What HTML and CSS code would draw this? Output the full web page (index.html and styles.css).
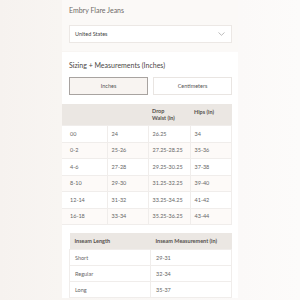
FILE: index.html
```html
<!DOCTYPE html>
<html>
<head>
<meta charset="utf-8">
<link rel="stylesheet" href="styles.css">
</head>
<body>
<div class="page">
  <div class="top">
    <div class="product">Embry Flare Jeans</div>
    <div class="select">
      <span>United States</span>
      <svg class="chev" width="7" height="4" viewBox="0 0 7 4"><path d="M0.5 0.5 L3.5 3.3 L6.5 0.5" fill="none" stroke="#aaa" stroke-width="0.8"/></svg>
    </div>
  </div>
  <div class="card">
    <h2 class="heading">Sizing + Measurements (Inches)</h2>
    <div class="toggle">
      <div class="btn active">Inches</div>
      <div class="btn">Centimeters</div>
    </div>
    <table class="sizes">
      <thead>
        <tr><th></th><th></th><th>Drop<br>Waist (in)</th><th class="top-al">Hips (in)</th></tr>
      </thead>
      <tbody>
        <tr><td>00</td><td>24</td><td>26.25</td><td>34</td></tr>
        <tr><td>0-2</td><td>25-26</td><td>27.25-28.25</td><td>35-36</td></tr>
        <tr><td>4-6</td><td>27-28</td><td>29.25-30.25</td><td>37-38</td></tr>
        <tr><td>8-10</td><td>29-30</td><td>31.25-32.25</td><td>39-40</td></tr>
        <tr><td>12-14</td><td>31-32</td><td>33.25-34.25</td><td>41-42</td></tr>
        <tr><td>16-18</td><td>33-34</td><td>35.25-36.25</td><td>43-44</td></tr>
      </tbody>
    </table>
    <table class="inseam">
      <thead>
        <tr><th>Inseam Length</th><th>Inseam Measurement (in)</th></tr>
      </thead>
      <tbody>
        <tr><td>Short</td><td>29-31</td></tr>
        <tr><td>Regular</td><td>32-34</td></tr>
        <tr><td>Long</td><td>35-37</td></tr>
      </tbody>
    </table>
  </div>
</div>
</body>
</html>
```
FILE: styles.css
```css
html, body { margin: 0; padding: 0; }
body {
  width: 300px;
  height: 300px;
  overflow: hidden;
  background: linear-gradient(to right, #f6f2ef 0%, #f8f5f2 20%, #fbf9f8 80%, #fcfbfa 100%);
  font-family: Lato, "Open Sans", sans-serif;
  color: #555;
}
.page {
  width: 176px;
  margin-left: 62px;
}
.top {
  background: #fbf9f7;
  padding: 6px 6px 8px 7px;
}
.product {
  font-size: 7px;
  color: #6e6a68;
  line-height: 9px;
  margin-bottom: 10px;
}
.select {
  background: #fff;
  border: 1px solid #ece8e5;
  height: 16px;
  display: flex;
  align-items: center;
  justify-content: space-between;
  padding: 0 6px 0 5px;
  font-size: 5.5px;
  color: #444;
}
.chev { display: block; }
.card {
  background: #fff;
  margin-top: 1px;
  padding: 8px 6px 0 0;
}
.heading {
  margin: 0 0 7px 7px;
  font-weight: normal;
  font-size: 7px;
  line-height: 10px;
  color: #4a4644;
}
.toggle {
  display: flex;
  gap: 5px;
  margin-left: 7px;
  margin-bottom: 9px;
}
.btn {
  flex: 1;
  height: 16px;
  border: 1px solid #e9e5e2;
  display: flex;
  align-items: center;
  justify-content: center;
  font-size: 5.5px;
  color: #555;
  background: #fff;
}
.btn.active {
  background: #f8f4f1;
  border-color: #a8a3a0;
}
table {
  border-collapse: collapse;
  width: 170px;
  font-size: 5.5px;
  color: #666;
}
th {
  background: #ebe7e3;
  font-weight: bold;
  color: #55514e;
  text-align: left;
  vertical-align: middle;
  font-size: 5.5px;
  line-height: 6.8px;
}
.sizes thead tr { height: 21.5px; }
.sizes th { padding: 0 4px; }
.sizes th.top-al { vertical-align: top; padding-top: 5px; }
td {
  border: 1px solid #f0edeb;
  padding: 0 4px;
  height: 15.5px;
}
.sizes td { padding-left: 8px; }
.sizes td:nth-child(2), .sizes td:nth-child(3), .sizes td:nth-child(4) { padding-left: 4px; }
.sizes td:first-child { border-left: none; }
.sizes tbody tr:nth-child(even) td { background: #fdfaf8; }
.sizes th:nth-child(1) { width: 37px; }
.sizes th:nth-child(2) { width: 33px; }
.sizes th:nth-child(3) { width: 34px; }
.inseam {
  margin-left: 7px;
  width: 163px;
  margin-top: 8px;
}
.inseam thead tr { height: 16.5px; }
.inseam th { padding: 0 5px; }
.inseam th:first-child { width: 71px; }
.inseam td { padding: 0 5px; height: 15px; }
```
